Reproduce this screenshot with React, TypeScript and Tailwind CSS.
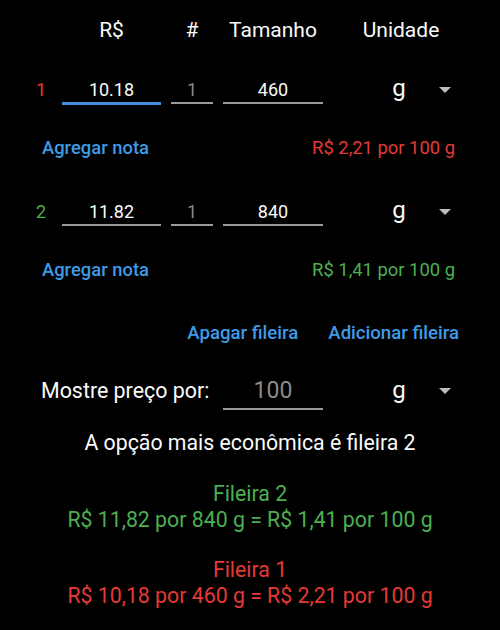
import React from "react";

const Tri = ({ mt }: { mt: string }) => (
  <svg width="12" height="6" viewBox="0 0 12 6" className={mt}>
    <polygon points="0,0 12,0 6,6" fill="#bdbdbd" />
  </svg>
);

const Unit = ({ gmt, tmt }: { gmt: string; tmt: string }) => (
  <div className="flex items-start w-[150px]">
    <span className={`ml-[62px] w-[28px] text-center text-[24px] leading-[20px] text-[#fafafa] ${gmt}`}>g</span>
    <div className="ml-[26px]">
      <Tri mt={tmt} />
    </div>
  </div>
);

const Input = ({ value, w, focused, gray }: { value: string; w: string; focused?: boolean; gray?: boolean }) => (
  <div className={`${w} flex flex-col`}>
    <div className={`text-center text-[18px] leading-[24px] ${gray ? "text-[#8a8a8a]" : "text-[#fafafa]"}`}>{value}</div>
    <div className={focused ? "h-[3px] bg-[#3f8fdf]" : "h-[2px] bg-[#9a9a9a]"} />
  </div>
);

const Row = ({ n, color, price, count, size, focused, mt }: { n: string; color: string; price: string; count: string; size: string; focused?: boolean; mt: string }) => (
  <div className={`flex items-start ${mt}`}>
    <div className={`w-[62px] pl-[36px] text-[18px] leading-[24px] ${color}`}>{n}</div>
    <Input value={price} w="w-[99px]" focused={focused} />
    <div className="w-[10px]" />
    <Input value={count} w="w-[42px]" gray />
    <div className="w-[10px]" />
    <Input value={size} w="w-[100px]" />
    <Unit gmt="mt-0" tmt="mt-[9px]" />
  </div>
);

const Note = ({ text, color, mt }: { text: string; color: string; mt: string }) => (
  <div className={`flex items-start justify-between pl-[42px] pr-[45px] ${mt}`}>
    <span className="text-[18.4px] leading-[24px] font-medium text-[#3d9be9]">Agregar nota</span>
    <span className={`text-[18.4px] leading-[24px] ${color}`}>{text}</span>
  </div>
);

export default function App() {
  return (
    <div className="w-[500px] h-[630px] bg-black overflow-hidden" style={{ fontFamily: "Roboto, 'Noto Sans', sans-serif" }}>
      <div className="flex items-start pt-[16px] text-[21px] leading-[28px] text-[#fafafa]">
        <div className="w-[62px]" />
        <div className="w-[99px] text-center">R$</div>
        <div className="w-[10px]" />
        <div className="w-[42px] text-center">#</div>
        <div className="w-[10px]" />
        <div className="w-[100px] text-center">Tamanho</div>
        <div className="w-[156px] text-center">Unidade</div>
      </div>

      <Row n="1" color="text-[#e53935]" price="10.18" count="1" size="460" focused mt="mt-[34px]" />
      <Note text="R$ 2,21 por 100 g" color="text-[#e53935]" mt="mt-[31px]" />

      <Row n="2" color="text-[#4caf50]" price="11.82" count="1" size="840" mt="mt-[40px]" />
      <Note text="R$ 1,41 por 100 g" color="text-[#4caf50]" mt="mt-[32px]" />

      <div className="flex items-start justify-end gap-[30px] pr-[41px] mt-[39px] text-[18.6px] leading-[24px] font-medium text-[#3d9be9]">
        <span>Apagar fileira</span>
        <span>Adicionar fileira</span>
      </div>

      <div className="flex items-start mt-[32px]">
        <div className="w-[223px] pl-[41px] text-[21.4px] leading-[28px] text-[#fafafa]">Mostre preço por:</div>
        <div className="w-[100px] flex flex-col">
          <div className="text-center text-[23px] leading-[28px] text-[#8a8a8a]">100</div>
          <div className="mt-[3px] h-[2px] bg-[#9a9a9a]" />
        </div>
        <Unit gmt="mt-[3px]" tmt="mt-[11px]" />
      </div>

      <div className="mt-[19px] text-center text-[21.3px] leading-[28px] text-[#fafafa]">A opção mais econômica é fileira 2</div>

      <div className="mt-[24px] text-center text-[21.3px] leading-[26px] text-[#4caf50]">
        <div>Fileira 2</div>
        <div>R$ 11,82 por 840 g = R$ 1,41 por 100 g</div>
      </div>
      <div className="mt-[24px] text-center text-[21.3px] leading-[26px] text-[#e53935]">
        <div>Fileira 1</div>
        <div>R$ 10,18 por 460 g = R$ 2,21 por 100 g</div>
      </div>
    </div>
  );
}
